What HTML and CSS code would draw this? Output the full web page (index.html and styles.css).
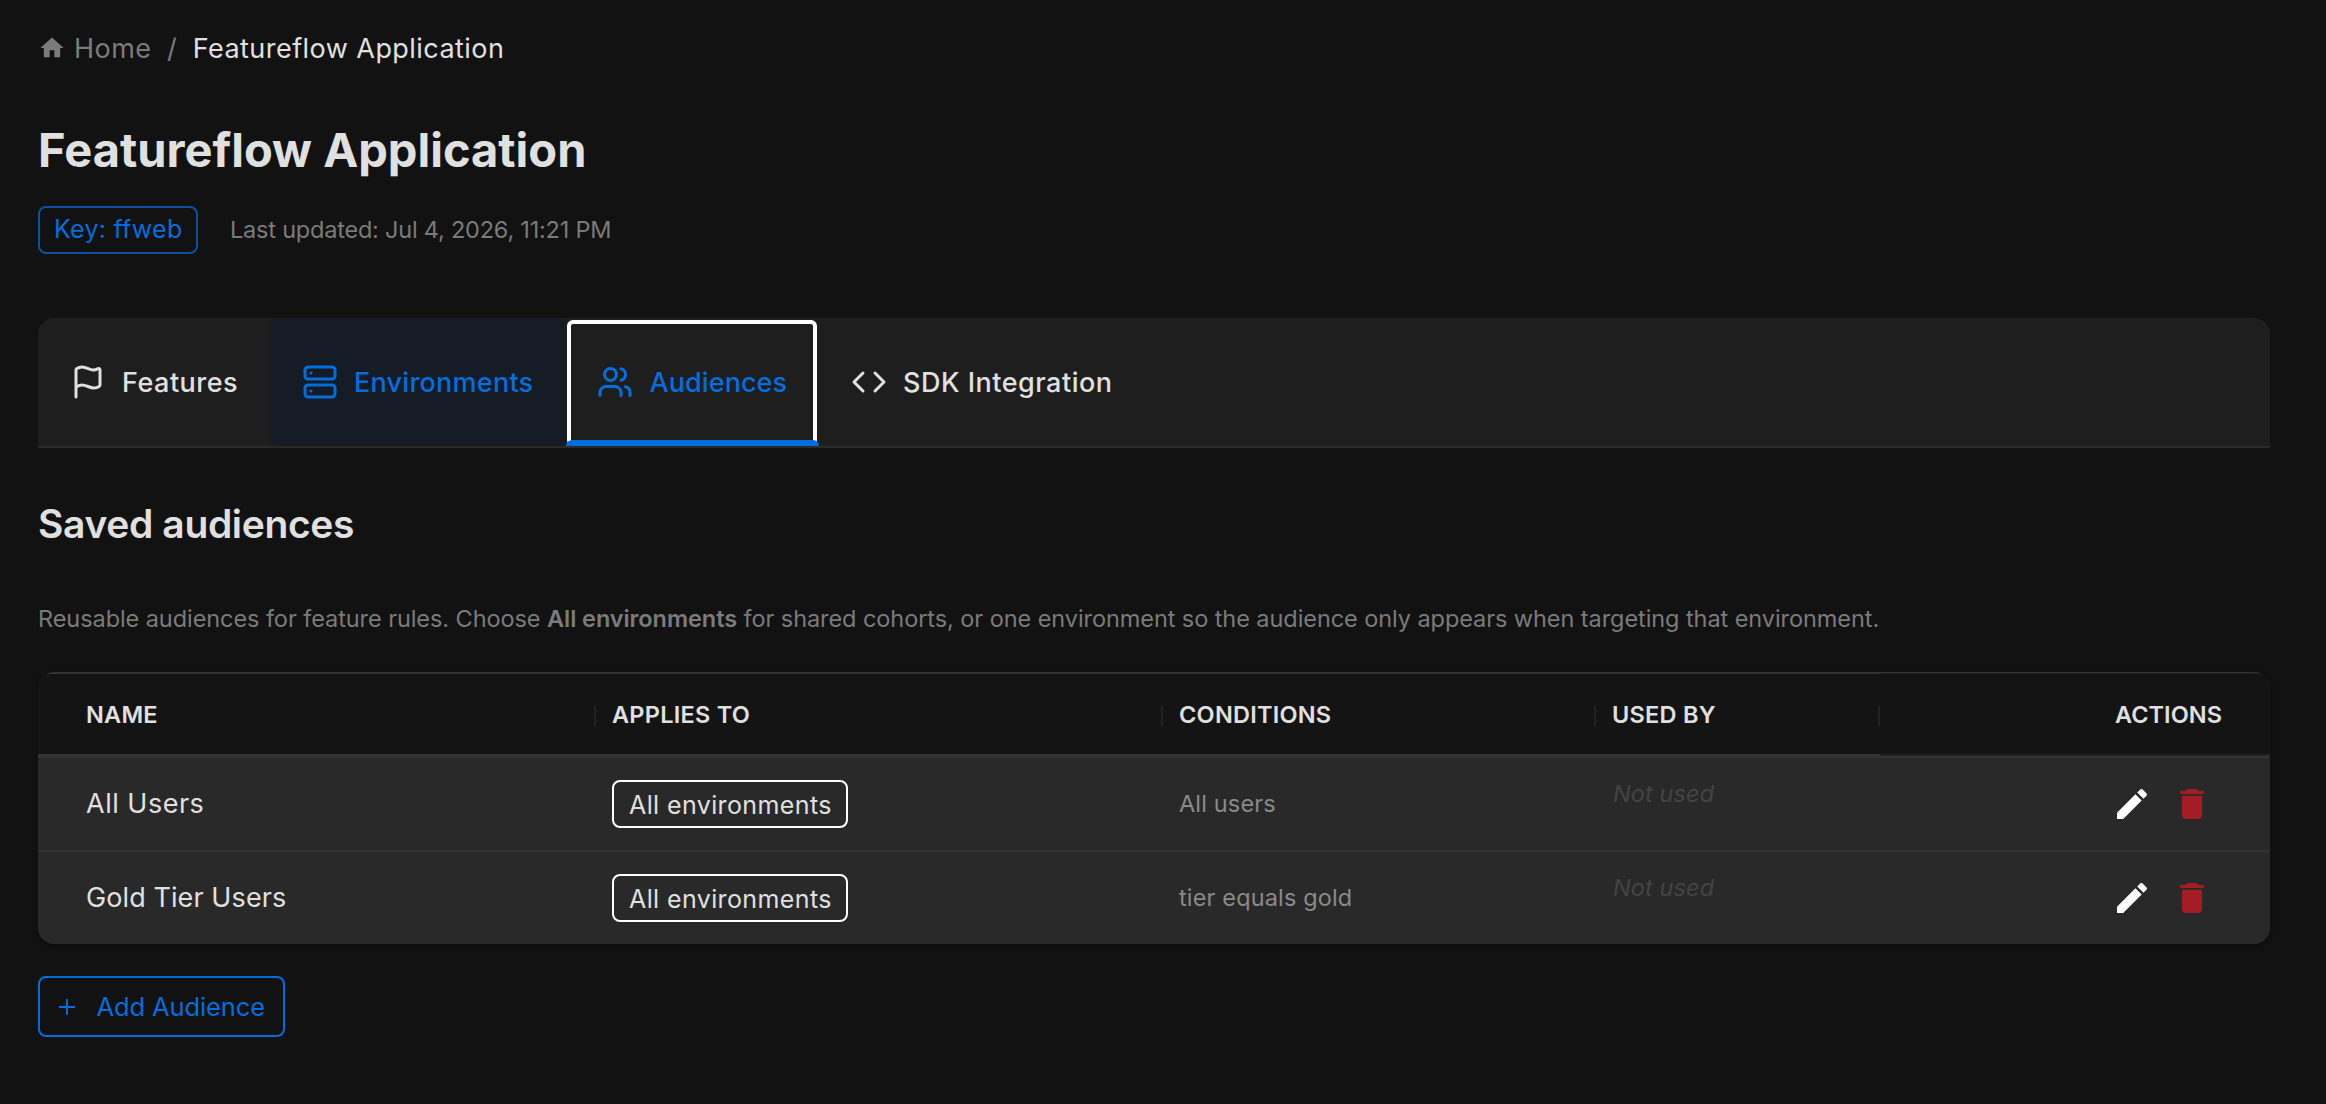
FILE: index.html
```html
<!DOCTYPE html>
<html lang="en">
<head>
<meta charset="utf-8">
<title>Featureflow Application</title>
<link rel="stylesheet" href="styles.css">
</head>
<body>
<svg class="sprite" aria-hidden="true">
  <symbol id="edit" viewBox="0 0 24 24"><path d="M3 17.25V21h3.75L17.81 9.94l-3.75-3.75L3 17.25zM20.71 7.04c.39-.39.39-1.02 0-1.41l-2.34-2.34c-.39-.39-1.02-.39-1.41 0l-1.83 1.83 3.75 3.75 1.83-1.83z"/></symbol>
  <symbol id="delete" viewBox="0 0 24 24"><path d="M6 19c0 1.1.9 2 2 2h8c1.1 0 2-.9 2-2V7H6v12zM19 4h-3.5l-1-1h-5l-1 1H5v2h14V4z"/></symbol>
</svg>
<main class="page">
  <nav class="breadcrumb">
    <svg class="home-icon" viewBox="0 0 24 24"><path d="M10 20v-6h4v6h5v-8h3L12 3 2 12h3v8z"/></svg>
    <a class="crumb">Home</a>
    <span class="slash">/</span>
    <span class="crumb current">Featureflow Application</span>
  </nav>

  <h1 class="title">Featureflow Application</h1>
  <div class="meta">
    <span class="chip key">Key: ffweb</span>
    <span class="updated">Last updated: Jul 4, 2026, 11:21 PM</span>
  </div>

  <div class="tabs">
    <button class="tab features">
      <svg class="tab-icon" viewBox="0 0 24 24"><path d="M4 22V4a1 1 0 0 1 .4-.8A6 6 0 0 1 8 2c3 0 5 2 7.333 2q2 0 3.067-.8A1 1 0 0 1 20 4v10a1 1 0 0 1-.4.8A6 6 0 0 1 16 16c-3 0-5-2-8-2a6 6 0 0 0-4 1.528"/></svg>
      Features
    </button>
    <button class="tab environments">
      <svg class="tab-icon" viewBox="0 0 24 24"><rect width="20" height="8" x="2" y="2" rx="2"/><rect width="20" height="8" x="2" y="14" rx="2"/><path d="M6 6h.01M6 18h.01"/></svg>
      Environments
    </button>
    <button class="tab audiences">
      <svg class="tab-icon" viewBox="0 0 24 24"><path d="M16 21v-2a4 4 0 0 0-4-4H6a4 4 0 0 0-4 4v2M16 3.128a4 4 0 0 1 0 7.744M22 21v-2a4 4 0 0 0-3-3.87"/><circle cx="9" cy="7" r="4"/></svg>
      Audiences
    </button>
    <button class="tab sdk">
      <svg class="tab-icon" viewBox="0 0 24 24"><path d="m16 18 6-6-6-6M8 6l-6 6 6 6"/></svg>
      SDK Integration
    </button>
  </div>

  <h2 class="heading">Saved audiences</h2>
  <p class="intro">Reusable audiences for feature rules. Choose <strong>All environments</strong> for shared cohorts, or one environment so the audience only appears when targeting that environment.</p>

  <section class="table">
    <div class="row head">
      <div class="cell">NAME<i class="sep"></i></div>
      <div class="cell">APPLIES TO<i class="sep"></i></div>
      <div class="cell">CONDITIONS<i class="sep"></i></div>
      <div class="cell">USED BY<i class="sep"></i></div>
      <div class="cell actions">ACTIONS</div>
    </div>
    <div class="row">
      <div class="cell name">All Users</div>
      <div class="cell"><span class="chip env">All environments</span></div>
      <div class="cell condition">All users</div>
      <div class="cell unused">Not used</div>
      <div class="cell actions"><svg class="edit"><use href="#edit"/></svg><svg class="delete"><use href="#delete"/></svg></div>
    </div>
    <div class="row">
      <div class="cell name gold">Gold Tier Users</div>
      <div class="cell"><span class="chip env">All environments</span></div>
      <div class="cell condition">tier equals gold</div>
      <div class="cell unused">Not used</div>
      <div class="cell actions"><svg class="edit"><use href="#edit"/></svg><svg class="delete"><use href="#delete"/></svg></div>
    </div>
  </section>

  <button class="add"><svg class="plus" viewBox="0 0 16 16"><path d="M0 8h16M8 0v16"/></svg>Add Audience</button>
</main>
</body>
</html>
```
FILE: styles.css
```css
* { box-sizing: border-box; }
body {
  margin: 0;
  background: #121212;
  color: #e0e0e0;
  font-family: Inter, "Liberation Sans", sans-serif;
}
button { margin: 0; background: none; border: 0; font-family: inherit; }
.sprite { display: none; }
.page { padding: 28px 56px 0 38px; }

.breadcrumb {
  display: flex;
  align-items: center;
  height: 40px;
  font-size: 27px;
  line-height: 38px;
  letter-spacing: .45px;
  color: #7b7b7b;
}
.crumb, .slash { padding-top: 2px; }
.home-icon { width: 28px; height: 28px; margin-right: 8px; fill: #7b7b7b; }
.slash { margin: 0 16px 0 15.5px; letter-spacing: 0; }
.current { color: #e0e0e0; }

.title {
  margin: 52px 0 26px;
  font-size: 47px;
  font-weight: 700;
  line-height: 60px;
  letter-spacing: 0;
}
.meta { display: flex; align-items: center; gap: 32px; margin-bottom: 64px; }
.chip {
  display: flex;
  align-items: center;
  height: 48px;
  padding: 0 14px;
  border: 2px solid #fff;
  border-radius: 8px;
  font-size: 25px;
  white-space: nowrap;
}
.key { width: 160px; border-color: #0c519f; color: #006edc; letter-spacing: .25px; padding-bottom: 2px; }
.updated { font-size: 23.5px; line-height: 40px; letter-spacing: -.21px; color: #7b7b7b; }

.tabs {
  display: flex;
  height: 130px;
  background: #1e1e1e;
  border-bottom: 2px solid #2a2a2a;
  border-radius: 16px 16px 0 0;
}
.tab {
  position: relative;
  display: flex;
  align-items: center;
  gap: 16px;
  height: 128px;
  padding: 0 0 0 32px;
  border-radius: 8px;
  color: #e0e0e0;
  font-size: 27px;
  font-weight: 500;
  letter-spacing: .5px;
  white-space: nowrap;
}
.tab-icon {
  flex: none;
  width: 36px;
  height: 36px;
  fill: none;
  stroke: currentColor;
  stroke-width: 2;
  stroke-linecap: round;
  stroke-linejoin: round;
}
.features { width: 232px; }
.environments { width: 295.5px; background: #161c26; color: #006edc; letter-spacing: .24px; }
.audiences { width: 253.5px; padding-left: 31px; gap: 17px; color: #006edc; letter-spacing: .08px; }
.audiences::before {
  content: "";
  position: absolute;
  inset: 2px 2px 0 1.5px;
  border: 4px solid #fff;
  border-radius: 6px;
}
.audiences::after {
  content: "";
  position: absolute;
  inset: auto 0 0 0;
  height: 6px;
  background: #006edc;
  border-radius: 6px 6px 0 0;
}

.heading {
  margin: 46px 0 45px;
  font-size: 39px;
  font-weight: 600;
  line-height: 60px;
  letter-spacing: -.36px;
}
.intro {
  margin: 0 0 33px;
  font-size: 23.5px;
  line-height: 40px;
  letter-spacing: -.07px;
  color: #7b7b7b;
}
.intro strong { font-weight: 600; }

.table {
  overflow: hidden;
  border-radius: 16px;
  background: #292929;
  box-shadow: 0 2px 4px rgba(0, 0, 0, .35);
}
.row {
  display: grid;
  grid-template-columns: 558px 567px 433px 284px 390px;
  height: 92px;
}
.row + .row + .row { height: 94px; border-top: 2px solid #333; }
.cell { display: flex; align-items: center; padding-left: 16px; white-space: nowrap; }
.cell:first-child { padding-left: 48px; }
.head {
  height: 86px;
  background: #141414;
  border-top: 1px solid #333;
  border-bottom: 2px solid #333;
  font-size: 23.5px;
  font-weight: 600;
  letter-spacing: .25px;
}
.head .cell {
  justify-content: space-between;
  border-top: 1px solid #333;
  border-bottom: 2px solid #333;
}
.sep { width: 2px; height: 20px; margin-top: 4px; background: #232323; }
.head .actions { justify-content: flex-end; padding-right: 48px; border-color: #212121; letter-spacing: .05px; }
.name { padding-bottom: 2px; font-size: 27px; letter-spacing: .5px; }
.gold { letter-spacing: .09px; }
.env { width: 236px; padding: 2px 0 0 15px; letter-spacing: .39px; }
.condition { padding-bottom: 1px; font-size: 23.5px; letter-spacing: .15px; color: #8a8a8a; }
.unused { padding: 0 0 21px 17px; font-size: 23.5px; font-style: italic; letter-spacing: .1px; color: #444; }
.actions { justify-content: flex-end; gap: 20px; padding-right: 58px; }
.edit, .delete { width: 40px; height: 40px; fill: #fff; }
.delete { fill: #a51d24; }

.add {
  display: flex;
  align-items: center;
  gap: 21.5px;
  width: 247px;
  height: 61px;
  margin-top: 32px;
  padding: 0 0 0 19px;
  border: 2px solid #006edc;
  border-radius: 8px;
  color: #006edc;
  font-size: 25.5px;
  letter-spacing: -.12px;
  white-space: nowrap;
}
.plus { width: 16px; height: 16px; stroke: #006edc; stroke-width: 1.9; }
```
